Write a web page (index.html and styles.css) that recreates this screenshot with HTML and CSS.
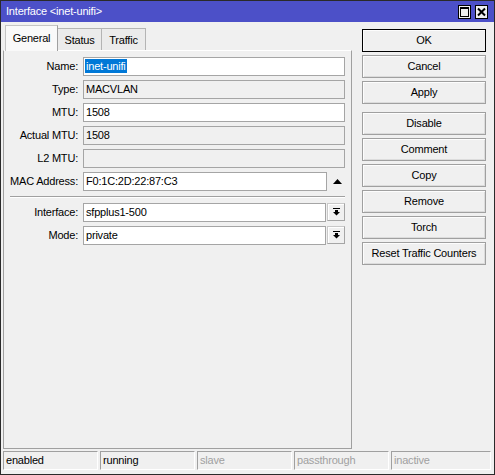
FILE: index.html
```html
<!DOCTYPE html>
<html>
<head>
<meta charset="utf-8">
<title>Interface &lt;inet-unifi&gt;</title>
<link rel="stylesheet" href="styles.css">
</head>
<body>
<div class="win">
  <div class="titlebar">
    <span class="title">Interface &lt;inet-unifi&gt;</span>
    <div class="tb-btns">
      <span class="tbb"><svg width="11" height="12" viewBox="0 0 11 12"><rect x="1.5" y="1.5" width="8" height="9" fill="none" stroke="#000" stroke-width="1"/><rect x="1" y="1" width="9" height="2" fill="#000"/></svg></span>
      <span class="tbb"><svg width="11" height="12" viewBox="0 0 11 12"><path d="M2 2.5 L9 9.5 M9 2.5 L2 9.5" stroke="#000" stroke-width="2"/></svg></span>
    </div>
  </div>
  <div class="main">
    <div class="left">
      <div class="tabs">
        <div class="tab active">General</div>
        <div class="tab">Status</div>
        <div class="tab">Traffic</div>
      </div>
      <div class="panel">
        <div class="form">
          <div class="lbl">Name:</div>
          <div class="field"><span class="sel">inet-unifi</span></div>
          <div class="lbl">Type:</div>
          <div class="field ro">MACVLAN</div>
          <div class="lbl">MTU:</div>
          <div class="field">1508</div>
          <div class="lbl">Actual MTU:</div>
          <div class="field ro">1508</div>
          <div class="lbl">L2 MTU:</div>
          <div class="field ro"></div>
          <div class="lbl">MAC Address:</div>
          <div class="combo">
            <div class="field grow">F0:1C:2D:22:87:C3</div>
            <div class="uparrow"><svg width="9" height="5" viewBox="0 0 9 5"><polygon points="0,5 9,5 4.5,0" fill="#000"/></svg></div>
          </div>
          <div class="sep"></div>
          <div class="lbl">Interface:</div>
          <div class="combo">
            <div class="field grow">sfpplus1-500</div>
            <div class="ddbtn"><svg width="7" height="8" viewBox="0 0 7 8"><rect x="0" y="0" width="7" height="1" fill="#000"/><rect x="2" y="2" width="3" height="2" fill="#000"/><polygon points="0,4 7,4 3.5,7.5" fill="#000"/></svg></div>
          </div>
          <div class="lbl">Mode:</div>
          <div class="combo">
            <div class="field grow">private</div>
            <div class="ddbtn"><svg width="7" height="8" viewBox="0 0 7 8"><rect x="0" y="0" width="7" height="1" fill="#000"/><rect x="2" y="2" width="3" height="2" fill="#000"/><polygon points="0,4 7,4 3.5,7.5" fill="#000"/></svg></div>
          </div>
        </div>
      </div>
    </div>
    <div class="buttons">
      <div class="btn default">OK</div>
      <div class="btn">Cancel</div>
      <div class="btn">Apply</div>
      <div class="btn spaced">Disable</div>
      <div class="btn">Comment</div>
      <div class="btn">Copy</div>
      <div class="btn">Remove</div>
      <div class="btn">Torch</div>
      <div class="btn">Reset Traffic Counters</div>
    </div>
  </div>
  <div class="statusbar">
    <div class="sb">enabled</div>
    <div class="sb">running</div>
    <div class="sb dim">slave</div>
    <div class="sb dim">passthrough</div>
    <div class="sb dim wide">inactive</div>
  </div>
</div>
</body>
</html>
```
FILE: styles.css
```css
* { box-sizing: border-box; }
html, body { margin: 0; padding: 0; background: #f0f0f0; }
body {
  font-family: "Liberation Sans", Arial, sans-serif;
  font-size: 11px;
  letter-spacing: -0.2px;
  color: #000;
}
.win {
  width: 495px;
  height: 475px;
  border: 1px solid #2a2a2a;
  background: #f0f0f0;
  display: flex;
  flex-direction: column;
}
.titlebar {
  height: 21px;
  background: #4c50c8;
  display: flex;
  align-items: center;
  justify-content: space-between;
  padding: 0 6px 0 5px;
}
.title { color: #fff; line-height: 21px; }
.tb-btns { display: flex; gap: 4px; }
.tbb {
  width: 13px;
  height: 14px;
  border: 1px solid #000;
  background: #f0f0f0;
  display: flex;
  align-items: center;
  justify-content: center;
}
.tbb svg { display: block; }
.main {
  height: 427px;
  display: flex;
  padding-left: 2px;
}
.left {
  width: 349px;
  display: flex;
  flex-direction: column;
  padding-top: 3px;
}
.tabs {
  height: 25px;
  display: flex;
  align-items: flex-end;
  padding-left: 2px;
  position: relative;
  z-index: 1;
}
.tab {
  height: 22px;
  border: 1px solid #b4b4b4;
  border-bottom: none;
  border-left-color: #d6d6d6;
  background: #ebebeb;
  padding: 0 6px;
  line-height: 22px;
  text-align: center;
}
.tab.active {
  width: 53px;
  height: 26px;
  margin-bottom: -1px;
  background: #f9f9f9;
  border-color: #c4c4c4 #a0a0a0 #c4c4c4 #c4c4c4;
  line-height: 24px;
}
.tab:nth-child(2) { width: 44px; border-left: none; }
.tab:nth-child(3) { width: 44px; border-left: none; }
.panel {
  height: 399px;
  border: 1px solid #a0a0a0;
  border-top-color: #ffffff;
  padding: 6px 6px 0 0;
}
.form {
  display: grid;
  grid-template-columns: 74px 1fr;
  column-gap: 5px;
  row-gap: 4px;
  grid-auto-rows: auto;
}
.lbl {
  text-align: right;
  line-height: 19px;
  height: 19px;
  white-space: nowrap;
}
.field {
  height: 19px;
  border: 1px solid #a5a5a5;
  background: #fff;
  padding-left: 2px;
  line-height: 17px;
  white-space: nowrap;
  overflow: hidden;
}
.field.ro { background: #f0f0f0; }
.sel {
  display: inline-block;
  margin-left: -1px;
  margin-top: 1px;
  padding: 0 1px;
  height: 14px;
  line-height: 14px;
  vertical-align: top;
  background: #0078d7;
  color: #fff;
}
.combo { display: flex; height: 19px; }
.grow { flex: 1; }
.uparrow {
  width: 18px;
  display: flex;
  align-items: center;
  justify-content: center;
  padding-left: 2px;
}
.uparrow svg, .ddbtn svg { display: block; }
.ddbtn {
  width: 18px;
  height: 18px;
  border: 1px solid #a5a5a5;
  border-top-color: #c8c8c8;
  border-left-color: #c8c8c8;
  background: #f0f0f0;
  display: flex;
  align-items: center;
  justify-content: center;
  margin-left: 1px;
  box-shadow: inset 1px 1px 0 #fff;
}
.sep {
  grid-column: 1 / -1;
  margin: 1px 0 1px 6px;
  border-top: 1px solid #a0a0a0;
  border-bottom: 1px solid #ffffff;
}
.buttons {
  width: 124px;
  margin-left: 10px;
  padding-top: 7px;
  display: flex;
  flex-direction: column;
  gap: 3px;
}
.btn {
  height: 23px;
  border: 1px solid #a0a0a0;
  background: #f0f0f0;
  box-shadow: inset 1px 1px 0 #fdfdfd, inset -1px -1px 0 #dcdcdc;
  text-align: center;
  line-height: 21px;
  white-space: nowrap;
}
.btn.default { border-color: #000; box-shadow: inset 1px 1px 0 #fdfdfd; }
.btn.spaced { margin-top: 5px; }
.statusbar {
  display: flex;
  gap: 2px;
  padding: 2px 0 0 2px;
}
.sb {
  width: 95px;
  height: 19px;
  border: 1px solid #a0a0a0;
  border-right-color: #fff;
  border-bottom-color: #fff;
  padding-left: 2px;
  line-height: 17px;
  white-space: nowrap;
}
.sb.wide { width: 100px; }
.sb.dim { color: #a0a0a0; }
```
